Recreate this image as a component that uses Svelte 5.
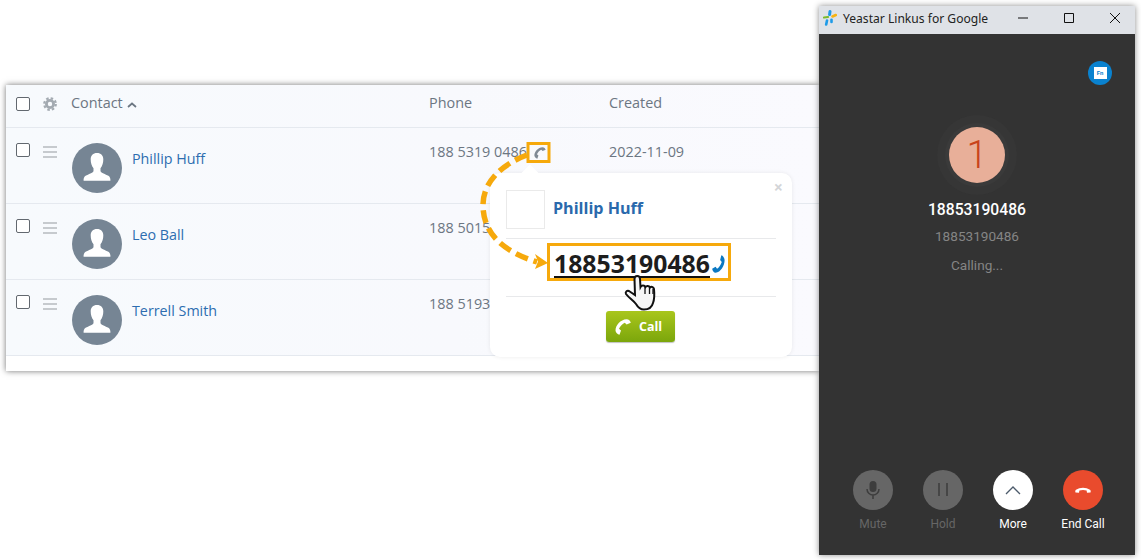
<script>
  const contacts = [
    { name: 'Phillip Huff', phone: '188 5319 0486', created: '2022-11-09' },
    { name: 'Leo Ball', phone: '188 5015 2277', created: '' },
    { name: 'Terrell Smith', phone: '188 5193 6620', created: '' }
  ];
  const handset = 'M4.500 15.800C2.600 15.500.6 13.500.5 11.500.5 6 5.500.6 11.500.2c2-.1 4 1.600 4.300 3.600L11.600 5.500 9.800 3.700C7.500 4.800 5 7.300 4 9.800L6 11.500z';
</script>

<div class="page">
  <section class="card">
    <div class="row head">
      <span class="check"></span>
      <svg class="gear" viewBox="0 0 14 14">
        <circle cx="7" cy="7" r="3.600" fill="none" stroke="#a3aab1" stroke-width="2.800"/>
        <circle cx="7" cy="7" r="5.800" fill="none" stroke="#a3aab1" stroke-width="2.200" stroke-dasharray="2.500 2.050"/>
      </svg>
      <span class="title contact">Contact
        <svg class="caret" viewBox="0 0 10 6"><path d="M1 5l4-3.500L9 5" fill="none" stroke="#6b7682" stroke-width="1.700"/></svg>
      </span>
      <span class="title">Phone</span>
      <span class="title">Created</span>
    </div>
    {#each contacts as c}
      <div class="row item">
        <span class="check"></span>
        <span class="drag"><i></i><i></i><i></i></span>
        <span class="who">
          <svg class="avatar" viewBox="0 0 50 50">
            <circle cx="25" cy="25" r="25" fill="#768594"/>
            <path d="M25 10c-4 0-6.300 2.600-6.300 6.500 0 3.500 1 6.500 2.800 8.700v3c-.6 1.700-5 3-7.900 4.500-1.400.8-2.200 2.700-2 5h26.800c.2-2.300-.6-4.200-2-5-2.900-1.500-7.300-2.800-7.900-4.500v-3c1.800-2.200 2.800-5.200 2.800-8.700C31.300 12.600 29 10 25 10z" fill="#fff"/>
          </svg>
          <a class="name" href="#top">{c.name}</a>
        </span>
        <span class="cell">{c.phone}</span>
        <span class="cell">{c.created}</span>
      </div>
    {/each}
    <div class="foot"></div>

    <div class="popup">
      <span class="tip"></span>
      <span class="close">×</span>
      <div class="pop-head">
        <span class="pic"></span>
        <strong>Phillip Huff</strong>
      </div>
      <div class="pop-num">
        <span class="number">18853190486</span>
        <svg class="blue" viewBox="0 0 16 16" preserveAspectRatio="none"><path d={handset} fill="#0b78c2" transform="matrix(-1 0 0 -1 16 16)"/></svg>
      </div>
      <div class="pop-foot">
        <button class="call">
          <svg viewBox="0 0 16 16"><path d={handset} fill="#fff"/></svg>
          Call
        </button>
      </div>
    </div>
  </section>

  <section class="win">
    <header class="bar">
      <svg class="logo" viewBox="0 0 14 16" fill="none" stroke-linecap="round">
        <path d="M7 1.500L6.600 4.500" stroke="#1e9be8" stroke-width="3"/>
        <path d="M9.500 6.500L12.800 5" stroke="#f6b312" stroke-width="2.600"/>
        <path d="M1 7.500L5 7" stroke="#7cbb2a" stroke-width="2.200"/>
        <path d="M4 10.500L3.200 14.500" stroke="#1e9be8" stroke-width="2.600"/>
        <path d="M8.500 9.800V12" stroke="#1e9be8" stroke-width="2.600"/>
      </svg>
      <span class="win-title">Yeastar Linkus for Google</span>
      <span class="ctl">
        <svg viewBox="0 0 10 10"><path d="M0 5h10" stroke="#111" fill="none"/></svg>
        <svg viewBox="0 0 10 10"><path d="M.5.5h9v9h-9z" stroke="#111" fill="none"/></svg>
        <svg viewBox="0 0 10 10"><path d="M0 0l10 10M10 0L0 10" stroke="#111" fill="none"/></svg>
      </span>
    </header>
    <div class="body">
      <div class="badge-row"><span class="badge"><b>Fn</b></span></div>
      <div class="ring"><div class="ring2"><div class="face">1</div></div></div>
      <div class="num1">18853190486</div>
      <div class="num2">18853190486</div>
      <div class="status">Calling...</div>
      <div class="actions">
        <div class="act off">
          <span class="btn"><svg viewBox="0 0 20 20"><rect x="6.500" y="1" width="7" height="11" rx="3.500" fill="#3d3d3d"/><path d="M4 9a6 6 0 0 0 12 0M10 15v4" fill="none" stroke="#3d3d3d" stroke-width="1.500"/></svg></span>
          Mute
        </div>
        <div class="act off">
          <span class="btn"><svg viewBox="0 0 20 20"><path d="M6 3v13M14 3v13" stroke="#3d3d3d" stroke-width="1.500" fill="none"/></svg></span>
          Hold
        </div>
        <div class="act">
          <span class="btn white"><svg viewBox="0 0 20 20"><path d="M3 14l7-7 7 7" stroke="#4c5a6b" stroke-width="1.300" fill="none"/></svg></span>
          More
        </div>
        <div class="act">
          <span class="btn red"><svg viewBox="0 0 20 20"><path d="M2.500 12.500c-.4-1-.3-2 .5-2.700 4-2.700 10-2.700 14 0 .8.700.9 1.700.5 2.700l-3.500.3-.4-2.200c-2.400-.8-4.800-.8-7.200 0l-.4 2.200z" fill="#fff"/></svg></span>
          End Call
        </div>
      </div>
    </div>
  </section>

  <svg class="notes" viewBox="0 0 1141 560">
    <rect x="528" y="143.500" width="21" height="18" fill="none" stroke="#f6a90c" stroke-width="3"/>
    <path d={handset} fill="#808a95" transform="translate(534 147) scale(.74)"/>
    <path d="M527 155C505 163 483 180 483 205 483 235 505 252 537 262" fill="none" stroke="#f6a90c" stroke-width="5.500" stroke-dasharray="13 6"/>
    <path d="M535 254l13 9-13 6 3-7.500z" fill="#f6a90c"/>
    <rect x="548.500" y="244.500" width="181" height="35" fill="none" stroke="#f6a90c" stroke-width="3"/>
    <path d="M636 304c-3-4-7-6-10-10-1-2 1-4 3-3l6 4-.5-16c0-4 5.500-4 5.500 0l.5 8c1-2 4-2 5 0 1-1.500 3.500-1.500 4.500.5 1-1 3.500-1 4 1.500.5 5 .5 10-1 14-1 4-4 6.500-9 6.500-3.500 0-6-2-8-5.500z" fill="#f6f6f6" stroke="#111" stroke-width="2"/>
    <path d="M645 286v8M649.500 287v7M653 289v5" stroke="#111" stroke-width="1.300" fill="none"/>
  </svg>
</div>

<style>
  :global(body) { margin: 0; background: #fff; }
  .page {
    position: relative; width: 1141px; height: 560px; overflow: hidden;
    display: flex; align-items: flex-start; padding-left: 6px; box-sizing: border-box;
    font-family: "Open Sans", sans-serif; background: #fff;
  }
  .card {
    position: relative; width: 813px; height: 286px; margin-top: 85px; flex: none;
    background: linear-gradient(90deg, #f7fafd 0%, #f8f9fd 55%, #fafafe 100%);
    box-shadow: 0 0 6px rgba(0,0,0,.55);
  }
  .row {
    display: grid; grid-template-columns: 27px 28px 358px 180px 1fr;
    padding-left: 10px; border-bottom: 1px solid #e5e9ef; box-sizing: border-box;
    color: #6c7682; font-size: 14.400px;
  }
  .head { height: 43px; align-items: center; padding-bottom: 5px; }
  .item { height: 76px; padding-top: 15px; }
  .foot { height: 15px; background: #fff; }
  .check { width: 12px; height: 12px; border: 1px solid #62686f; border-radius: 2px; background: #fff; }
  .gear { width: 14px; height: 14px; }
  .title { line-height: 20px; margin-top: -1px; }
  .caret { width: 10px; height: 6px; margin-left: 1px; }
  .drag { display: flex; flex-direction: column; gap: 3px; width: 14px; padding-top: 3px; }
  .drag i { height: 2px; background: #c6cace; }
  .who { display: flex; align-items: flex-start; gap: 10px; margin-left: 1px; }
  .avatar { width: 50px; height: 50px; flex: none; }
  .name { color: #2d6db0; text-decoration: none; line-height: 20px; margin-top: 6px; font-size: 14.300px; }
  .cell { line-height: 20px; margin-top: -1px; }

  .popup {
    position: absolute; left: 484px; top: 88px; width: 302px; height: 184px;
    background: #fff; border-radius: 10px; box-shadow: 0 0 4px rgba(0,0,0,.08);
    padding: 17px 16px 0; box-sizing: border-box;
  }
  .tip {
    position: absolute; left: 34px; top: -6px; width: 12px; height: 12px; background: #fff; transform: rotate(45deg);
  }
  .close { position: absolute; right: 9px; top: 4px; color: #d3d5d8; font: 700 16px/20px "Open Sans", sans-serif; }
  .pop-head { display: flex; gap: 8px; height: 49px; border-bottom: 1px solid #e8e9eb; box-sizing: border-box; align-items: flex-start; }
  .pic { width: 37px; height: 37px; border: 1px solid #eaeaea; flex: none; }
  .pop-head strong { color: #2a69ac; font-size: 16.100px; line-height: 36px; }
  .pop-num { display: flex; align-items: center; height: 58px; padding-left: 48px; box-sizing: border-box; border-bottom: 1px solid #e8e9eb; padding-bottom: 8px; }
  .number { color: #1d1d1d; font-size: 24.800px; font-weight: 700; line-height: 26px; border-bottom: 2px solid #111; }
  .blue { width: 13px; height: 18px; margin: 0 0 0 2px; }
  .pop-foot { display: flex; justify-content: center; padding: 14px 1px 0 0; }
  .call {
    display: flex; align-items: center; gap: 8px; width: 69px; height: 31px; padding: 0 0 0 9px; box-sizing: border-box;
    color: #fff; font: 700 12.500px "Open Sans", sans-serif; border: 0; border-radius: 3px;
    background: linear-gradient(#a9c61c, #7ba60c); box-shadow: 0 1px 1px rgba(0,0,0,.25);
  }
  .call svg { width: 16px; height: 16px; }

  .win {
    position: relative; width: 316px; height: 549px; margin-top: 6px; flex: none;
    display: flex; flex-direction: column; box-shadow: 0 0 6px rgba(0,0,0,.45); font-family: Roboto, sans-serif;
  }
  .bar { display: flex; align-items: center; height: 28px; background: #dfe2e7; padding: 0 0 4px 4px; box-sizing: border-box; flex: none; }
  .logo { width: 14px; height: 16px; margin-right: 6px; }
  .win-title { font: 12.100px "Noto Sans", sans-serif; color: #222; flex: 1; }
  .ctl { display: flex; gap: 36px; padding-right: 15px; }
  .ctl svg { width: 10px; height: 10px; overflow: visible; }
  .body { flex: 1; background: #333; display: flex; flex-direction: column; align-items: center; }
  .badge-row { align-self: stretch; display: flex; justify-content: flex-end; padding: 27px 23px 0 0; }
  .badge { width: 24px; height: 24px; border-radius: 50%; background: #0a82cf; display: grid; place-items: center; }
  .badge b { width: 13px; height: 12px; background: #fff; color: #0a82cf; font: 700 6px/12px Roboto, sans-serif; text-align: center; }
  .ring { width: 80px; height: 80px; border-radius: 50%; background: #363636; display: grid; place-items: center; margin-top: 30px; }
  .ring2 { width: 64px; height: 64px; border-radius: 50%; background: #3a3a3a; display: grid; place-items: center; }
  .face { width: 56px; height: 56px; border-radius: 50%; background: #e8af99; color: #c8431b; font: 300 38px/56px Roboto, sans-serif; text-align: center; }
  .num1 { color: #fff; font-size: 15.700px; font-weight: 500; line-height: 20px; margin-top: 5px; }
  .num2 { color: #858585; font-size: 13.600px; line-height: 20px; margin-top: 6px; }
  .status { color: #858585; font-size: 13.600px; line-height: 20px; margin-top: 9px; }
  .actions { display: flex; margin-top: auto; padding: 0 0 23px 2px; }
  .act { width: 70px; display: flex; flex-direction: column; align-items: center; gap: 6px; color: #fff; font-size: 12px; line-height: 16px; }
  .act.off { color: #666; }
  .btn { width: 40px; height: 40px; border-radius: 50%; background: #666; display: grid; place-items: center; }
  .btn svg { width: 20px; height: 20px; }
  .btn.white { background: #fff; }
  .btn.red { background: #e94b2d; }
  .notes { position: absolute; left: 0; top: 0; width: 1141px; height: 560px; pointer-events: none; }
</style>
